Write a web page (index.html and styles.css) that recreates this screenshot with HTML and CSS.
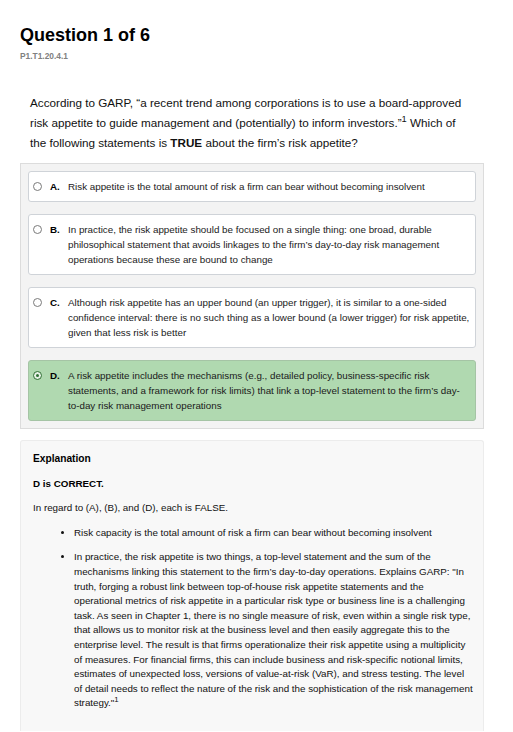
FILE: index.html
```html
<!DOCTYPE html>
<html>
<head>
<meta charset="utf-8">
<link rel="stylesheet" href="styles.css">
</head>
<body>
<div class="page">
  <h1 class="title">Question 1 of 6</h1>
  <div class="code">P1.T1.20.4.1</div>
  <p class="question">According to GARP, “a recent trend among corporations is to use a board-approved risk appetite to guide management and (potentially) to inform investors.”<sup>1</sup> Which of the following statements is <b>TRUE</b> about the firm’s risk appetite?</p>

  <div class="options">
    <div class="option">
      <span class="radio"></span>
      <span class="letter">A.</span>
      <span class="text">Risk appetite is the total amount of risk a firm can bear without becoming insolvent</span>
    </div>
    <div class="option">
      <span class="radio"></span>
      <span class="letter">B.</span>
      <span class="text">In practice, the risk appetite should be focused on a single thing: one broad, durable philosophical statement that avoids linkages to the firm’s day-to-day risk management operations because these are bound to change</span>
    </div>
    <div class="option">
      <span class="radio"></span>
      <span class="letter">C.</span>
      <span class="text">Although risk appetite has an upper bound (an upper trigger), it is similar to a one-sided confidence interval: there is no such thing as a lower bound (a lower trigger) for risk appetite, given that less risk is better</span>
    </div>
    <div class="option correct">
      <span class="radio checked"></span>
      <span class="letter">D.</span>
      <span class="text">A risk appetite includes the mechanisms (e.g., detailed policy, business-specific risk statements, and a framework for risk limits) that link a top-level statement to the firm’s day-to-day risk management operations</span>
    </div>
  </div>

  <div class="explanation">
    <p class="exp-title">Explanation</p>
    <p class="strong">D is CORRECT.</p>
    <p>In regard to (A), (B), and (D), each is FALSE.</p>
    <ul>
      <li>Risk capacity is the total amount of risk a firm can bear without becoming insolvent</li>
      <li>In practice, the risk appetite is two things, a top-level statement and the sum of the mechanisms linking this statement to the firm’s day-to-day operations. Explains GARP: "In truth, forging a robust link between top-of-house risk appetite statements and the operational metrics of risk appetite in a particular risk type or business line is a challenging task. As seen in Chapter 1, there is no single measure of risk, even within a single risk type, that allows us to monitor risk at the business level and then easily aggregate this to the enterprise level. The result is that firms operationalize their risk appetite using a multiplicity of measures. For financial firms, this can include business and risk-specific notional limits, estimates of unexpected loss, versions of value-at-risk (VaR), and stress testing. The level of detail needs to reflect the nature of the risk and the sophistication of the risk management strategy."<sup>1</sup></li>
    </ul>
  </div>
</div>
</body>
</html>
```

FILE: styles.css
```css
html, body {
  margin: 0;
  padding: 0;
  background: #ffffff;
}
body {
  font-family: "Liberation Sans", Arial, sans-serif;
  color: #111;
}
.page {
  padding: 24px 29px 0 20px;
}
.title {
  font-size: 18px;
  line-height: 22px;
  font-weight: bold;
  margin: 0;
  color: #000;
}
.code {
  font-size: 8.4px;
  line-height: 10px;
  font-weight: bold;
  color: #808080;
  margin-top: 5px;
}
.question {
  font-size: 11.7px;
  line-height: 20px;
  margin: 32px 0 10px 0;
  padding: 0 14px 0 10px;
  color: #111;
}
.question sup, .explanation sup {
  font-size: 0.8em;
  line-height: 0;
  vertical-align: 0.5em;
}
.question b {
  font-weight: bold;
}
.options {
  background: #f3f3f3;
  border: 1px solid #dcdcdc;
  padding: 7px 7px;
  display: flex;
  flex-direction: column;
  gap: 12px;
}
.option {
  background: #fff;
  border: 1px solid #cfd3d8;
  border-radius: 3px;
  display: grid;
  grid-template-columns: 9px 10px 1fr;
  column-gap: 8px;
  padding: 7px 5px 7px 4px;
  font-size: 9.8px;
  line-height: 15px;
  color: #1a1a1a;
}
.option.correct {
  background: #b0d9b0;
  border-color: #a5c4a5;
}
.radio {
  width: 7px;
  height: 7px;
  border: 1px solid #7a7a7a;
  border-radius: 50%;
  background: #fff;
  margin-top: 3px;
  box-sizing: content-box;
  position: relative;
}
.radio.checked {
  border-color: #2f6f33;
  background: #e6f2e6;
}
.radio.checked::after {
  content: "";
  position: absolute;
  left: 2px;
  top: 2px;
  width: 3px;
  height: 3px;
  border-radius: 50%;
  background: #2f6f33;
}
.letter {
  font-weight: bold;
  color: #000;
}
.explanation {
  margin-top: 11px;
  background: #f8f8f8;
  border: 1px solid #ececec;
  border-bottom: none;
  border-radius: 3px 3px 0 0;
  padding: 11px 10px 10px 12px;
  font-size: 9.8px;
  line-height: 14.6px;
  color: #111;
}
.explanation p {
  margin: 0 0 10px 0;
}
.exp-title, .strong {
  font-weight: bold;
  color: #000;
}
.exp-title {
  font-size: 10.2px;
}
.explanation ul {
  margin: 0;
  padding-left: 41px;
}
.explanation li {
  margin-bottom: 10px;
}
```
